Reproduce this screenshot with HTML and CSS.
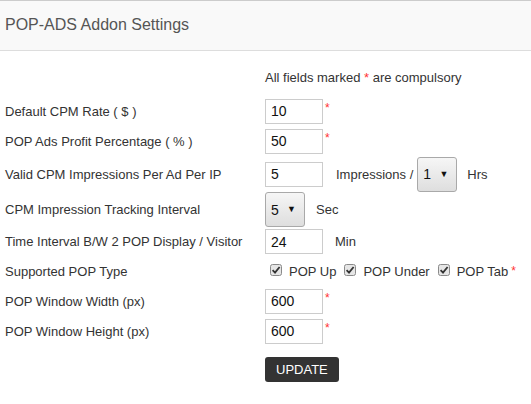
FILE: index.html
```html
<!DOCTYPE html>
<html lang="en">
<head>
  <meta charset="UTF-8" />
  <title>POP-ADS Addon Settings</title>
  <link rel="stylesheet" href="styles.css">
</head>
<body>
  <header>
    <h1>POP-ADS Addon Settings</h1>
  </header>
  <form class="settings">
    <div class="note">All fields marked <span class="req">*</span> are compulsory</div>

    <div class="row r30">
      <label for="cpm">Default CPM Rate ( $ )</label>
      <div class="field"><input type="text" id="cpm" value="10" /><span class="req sup">*</span></div>
    </div>
    <div class="row r30">
      <label for="profit">POP Ads Profit Percentage ( % )</label>
      <div class="field"><input type="text" id="profit" value="50" /><span class="req sup">*</span></div>
    </div>
    <div class="row r36">
      <label for="imp">Valid CPM Impressions Per Ad Per IP</label>
      <div class="field">
        <input type="text" id="imp" value="5" />
        <span class="unit u-imp">Impressions /</span>
        <span class="select"><select><option>1</option></select><span class="arrow">&#9660;</span></span>
        <span class="unit u-hrs">Hrs</span>
      </div>
    </div>
    <div class="row r35">
      <label>CPM Impression Tracking Interval</label>
      <div class="field">
        <span class="select"><select><option>5</option></select><span class="arrow">&#9660;</span></span>
        <span class="unit u-sec">Sec</span>
      </div>
    </div>
    <div class="row r29">
      <label for="gap">Time Interval B/W 2 POP Display / Visitor</label>
      <div class="field"><input type="text" id="gap" value="24" /><span class="unit u-min">Min</span></div>
    </div>
    <div class="row r30">
      <label>Supported POP Type</label>
      <div class="field checks">
        <span class="check"><svg viewBox="0 0 12 12" width="12" height="12"><rect x="0.5" y="0.5" width="11" height="11" rx="2" fill="#e6e6e6" stroke="#8a8a8a"/><path d="M2.6 6.2 L5 8.6 L9.6 3" fill="none" stroke="#333" stroke-width="1.8"/></svg> POP Up</span>
        <span class="check"><svg viewBox="0 0 12 12" width="12" height="12"><rect x="0.5" y="0.5" width="11" height="11" rx="2" fill="#e6e6e6" stroke="#8a8a8a"/><path d="M2.6 6.2 L5 8.6 L9.6 3" fill="none" stroke="#333" stroke-width="1.8"/></svg> POP Under</span>
        <span class="check last"><svg viewBox="0 0 12 12" width="12" height="12"><rect x="0.5" y="0.5" width="11" height="11" rx="2" fill="#e6e6e6" stroke="#8a8a8a"/><path d="M2.6 6.2 L5 8.6 L9.6 3" fill="none" stroke="#333" stroke-width="1.8"/></svg> POP Tab</span>
        <span class="req tab-req">*</span>
      </div>
    </div>
    <div class="row r30">
      <label for="w">POP Window Width (px)</label>
      <div class="field"><input type="text" id="w" value="600" /><span class="req sup">*</span></div>
    </div>
    <div class="row r30">
      <label for="h">POP Window Height (px)</label>
      <div class="field"><input type="text" id="h" value="600" /><span class="req sup">*</span></div>
    </div>

    <div class="actions">
      <button type="button">UPDATE</button>
    </div>
  </form>
</body>
</html>
```
FILE: styles.css
```css
body {
  margin: 0;
  font-family: "Liberation Sans", Arial, sans-serif;
  font-size: 13px;
  color: #333;
  background: #fff;
}
header {
  background-color: #f9f9f9;
  border-top: 1px solid #ccc;
  border-bottom: 1px solid #ddd;
  height: 49px;
  padding: 0 5px;
}
h1 {
  margin: 0;
  font-size: 16px;
  font-weight: normal;
  color: #555;
  line-height: 47px;
}
.settings {
  padding: 0 5px;
}
.note {
  margin: 19px 0 0 260px;
  height: 26px;
  line-height: 15px;
}
.req {
  color: #f33;
}
.sup {
  position: relative;
  top: -3px;
  margin-left: 2px;
  font-size: 12px;
}
.tab-req {
  font-size: 12px;
  margin-left: 3px;
}
.row {
  display: grid;
  grid-template-columns: 260px 1fr;
  align-items: center;
}
.r30 { height: 30px; }
.r36 { height: 36px; }
.r35 { height: 35px; }
.r29 { height: 29px; }
.field {
  display: flex;
  align-items: center;
}
input[type="text"] {
  box-sizing: border-box;
  width: 58px;
  height: 25px;
  padding: 0 5px;
  border: 1px solid #ccc;
  font-family: "Liberation Sans", Arial, sans-serif;
  font-size: 14px;
  color: #111;
}
.unit {
  font-size: 13px;
}
.u-imp { margin: 0 4px 0 13px; }
.u-hrs { margin-left: 10px; }
.u-sec { margin-left: 11px; }
.u-min { margin-left: 12px; }
.select {
  position: relative;
  display: inline-block;
}
.select select {
  appearance: none;
  -webkit-appearance: none;
  box-sizing: border-box;
  width: 40px;
  height: 35px;
  padding: 0 0 0 5px;
  border: 1px solid #a9a9a9;
  border-radius: 3px;
  background: linear-gradient(#f6f6f6, #dedede);
  font-family: "Liberation Sans", Arial, sans-serif;
  font-size: 14px;
  color: #111;
}
.select .arrow {
  position: absolute;
  right: 9px;
  top: 12px;
  font-size: 9px;
  color: #111;
  pointer-events: none;
}
.checks {
  padding-left: 5px;
}
.check {
  display: inline-flex;
  align-items: center;
  gap: 7px;
  margin-right: 8px;
}
.check.last {
  margin-right: 0;
}
.check svg {
  position: relative;
  top: -1px;
}
.actions {
  margin: 11px 0 0 260px;
}
button {
  background-color: #333;
  color: #fff;
  border: none;
  border-radius: 3px;
  height: 25px;
  padding: 0 11px;
  font-family: "Liberation Sans", Arial, sans-serif;
  font-size: 13px;
  cursor: pointer;
}
```
